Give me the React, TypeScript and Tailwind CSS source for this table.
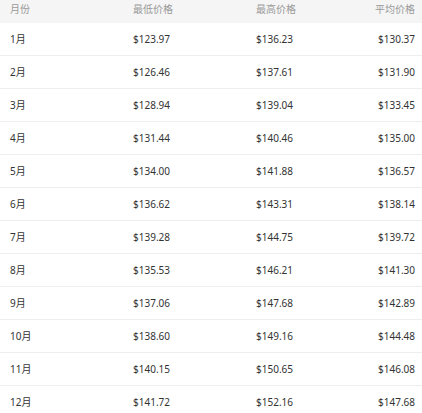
import React from "react";

const rows = [
  { month: "1月", low: "$123.97", high: "$136.23", avg: "$130.37" },
  { month: "2月", low: "$126.46", high: "$137.61", avg: "$131.90" },
  { month: "3月", low: "$128.94", high: "$139.04", avg: "$133.45" },
  { month: "4月", low: "$131.44", high: "$140.46", avg: "$135.00" },
  { month: "5月", low: "$134.00", high: "$141.88", avg: "$136.57" },
  { month: "6月", low: "$136.62", high: "$143.31", avg: "$138.14" },
  { month: "7月", low: "$139.28", high: "$144.75", avg: "$139.72" },
  { month: "8月", low: "$135.53", high: "$146.21", avg: "$141.30" },
  { month: "9月", low: "$137.06", high: "$147.68", avg: "$142.89" },
  { month: "10月", low: "$138.60", high: "$149.16", avg: "$144.48" },
  { month: "11月", low: "$140.15", high: "$150.65", avg: "$146.08" },
  { month: "12月", low: "$141.72", high: "$152.16", avg: "$147.68" },
];

export default function App() {
  return (
    <div
      className="w-[422px] h-[413px] overflow-hidden bg-white"
      style={{ fontFamily: '"Noto Sans", "Noto Sans CJK SC", sans-serif' }}
    >
      <div className="grid grid-cols-[123px_123px_1fr_auto] h-[23px] pl-[10px] pr-[7px] pt-[1px] bg-[#f5f5f5] text-[10px] leading-[16px] text-[#999]">
        <div>月份</div>
        <div>最低价格</div>
        <div>最高价格</div>
        <div className="text-right">平均价格</div>
      </div>
      {rows.map((r) => (
        <div
          key={r.month}
          className="grid grid-cols-[123px_123px_1fr_auto] items-center h-[33px] pl-[10px] pr-[7px] border-b border-[#eeeeee] text-[10px] text-[#333]"
        >
          <div>{r.month}</div>
          <div>{r.low}</div>
          <div>{r.high}</div>
          <div className="text-right">{r.avg}</div>
        </div>
      ))}
    </div>
  );
}
